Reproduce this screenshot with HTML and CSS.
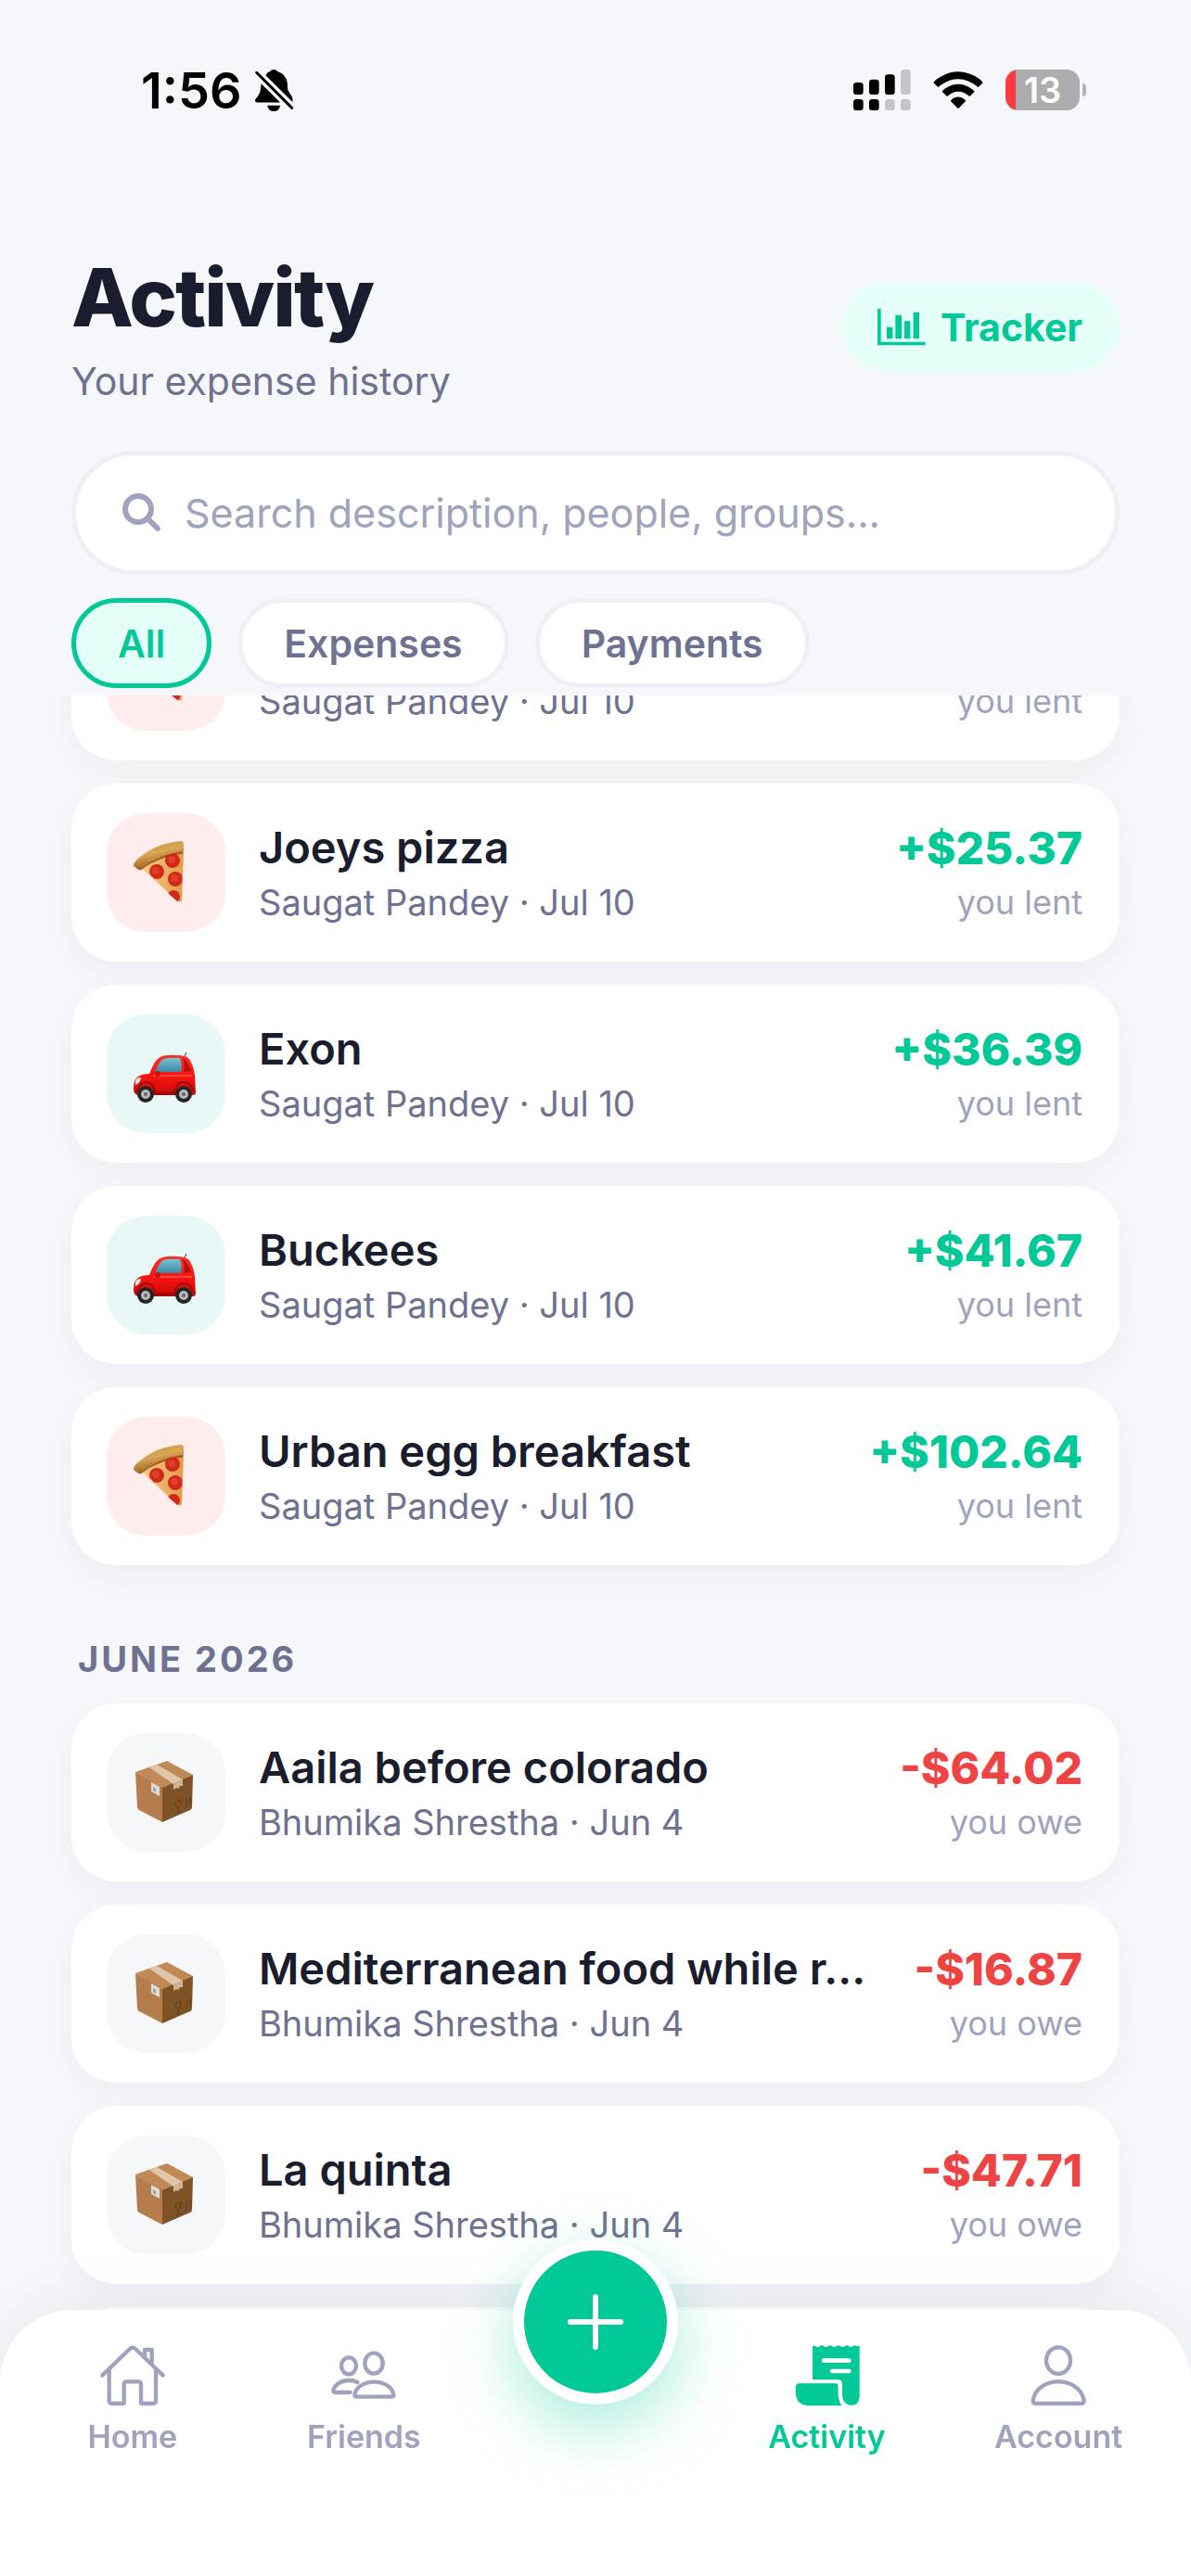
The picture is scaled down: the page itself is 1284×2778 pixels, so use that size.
FILE: index.html
```
<!DOCTYPE html>
<html lang="en">
<head>
    <meta charset="UTF-8">
    <meta name="viewport" content="width=device-width, initial-scale=1.0">
    <title>Activity</title>
    <link rel="stylesheet" href="styles.css">
</head>
<body>
    <svg class="sprite" aria-hidden="true">
        <defs>
            <linearGradient id="crust" x1="0" y1="0" x2="0.4" y2="1">
                <stop offset="0" stop-color="#c8953f"/>
                <stop offset="0.5" stop-color="#d9a655"/>
                <stop offset="1" stop-color="#8d5117"/>
            </linearGradient>
            <linearGradient id="cheese" x1="0" y1="0" x2="1" y2="0">
                <stop offset="0" stop-color="#f3cf8c"/>
                <stop offset="1" stop-color="#e59a48"/>
            </linearGradient>
            <linearGradient id="paint" x1="0" y1="0" x2="0" y2="1">
                <stop offset="0" stop-color="#f5342a"/>
                <stop offset="0.5" stop-color="#fb1510"/>
                <stop offset="1" stop-color="#c90a0a"/>
            </linearGradient>
            <linearGradient id="glass" x1="0" y1="0" x2="0" y2="1">
                <stop offset="0" stop-color="#7cc4d3"/>
                <stop offset="1" stop-color="#3d86a3"/>
            </linearGradient>
            <clipPath id="slice">
                <path d="M38 57 Q56 43 82 41 L81 94 Q79 98 75 94 L69 89 Z"/>
            </clipPath>
        </defs>
        <symbol id="pizza" viewBox="0 0 128 128">
            <path d="M36 58 Q56 42 83 39 L81 94 Q80 97 76 94 Z" fill="url(#cheese)"/>
            <path d="M36 60 Q56 45 82 42" fill="none" stroke="#a3591c" stroke-width="3"/>
            <g clip-path="url(#slice)" fill="#cf2a1b">
                <circle cx="71" cy="51" r="8"/>
                <circle cx="54" cy="63" r="8"/>
                <circle cx="74" cy="71" r="8"/>
                <circle cx="72" cy="90" r="7"/>
            </g>
            <g fill="#de3f26">
                <circle cx="70" cy="50" r="4"/>
                <circle cx="53" cy="62" r="4"/>
                <circle cx="73" cy="70" r="4"/>
            </g>
            <path d="M29 57 Q29 52 35 48 Q54 32 80 30 Q83 30 83 34 L83 41 Q56 44 37 61 Q35 62 33 60 Z" fill="url(#crust)"/>
        </symbol>
        <symbol id="car" viewBox="0 0 128 128">
            <path d="M84 45 L86 41" stroke="#333" stroke-width="1" fill="none"/>
            <path d="M46 64 Q51 51 56 47 Q62 43 75 44 Q86 44 89 48 Q94 56 95 66 L96 84 Q96 87 93 87 L34 87 Q29 86 29 80 Q29 70 34 67 Q38 64 46 64Z" fill="url(#paint)"/>
            <path d="M52 62 Q57 50 61 48 Q66 46 79 47 Q82 55 80 62 Z" fill="url(#glass)"/>
            <path d="M84 48 Q89 54 91 61 L83 62 Q85 55 82 48Z" fill="#b50e0c"/>
            <path d="M50 66 H92" stroke="#ff7a70" stroke-width="1"/>
            <path d="M31 72 Q32 68 37 68 Q37 73 31 76Z" fill="#fde9d6"/>
            <path d="M50 85 H76" stroke="#a50606" stroke-width="4"/>
            <path d="M32 84 Q35 73 43 73 Q51 73 52 85 M73 85 Q75 73 83 73 Q91 73 93 83" fill="none" stroke="#9f0808" stroke-width="2"/>
            <ellipse cx="55" cy="64" rx="3" ry="3" fill="#d40d0d"/>
            <circle cx="42" cy="86" r="9" fill="#262626"/>
            <circle cx="42" cy="86" r="5" fill="#b9b9b9"/>
            <circle cx="42" cy="86" r="2" fill="#666"/>
            <circle cx="83" cy="86" r="9" fill="#262626"/>
            <circle cx="83" cy="86" r="5" fill="#b9b9b9"/>
            <circle cx="83" cy="86" r="2" fill="#666"/>
        </symbol>
        <symbol id="box" viewBox="0 0 128 128">
            <path d="M31 42 L65 30 L93 45 L60 60Z" fill="#c08a57"/>
            <path d="M31 42 L60 59 L60 96 L35 83 Q33 82 33 80Z" fill="#b67d4c"/>
            <path d="M60 59 L93 45 L92 80 Q92 82 90 83 L60 96Z" fill="#805327"/>
            <path d="M46 37 L54 34 L82 50 L72 55Z" fill="#e0c6a8"/>
            <path d="M72 55 L82 50 L82 57 L79 57 L77 60 L75 59 L72 61Z" fill="#cdb595"/>
            <path d="M48 53 L57 58 L57 68 L48 63Z" fill="#dcdcd8"/>
            <path d="M50 58 L53 60 V64 L50 62Z" fill="#9aa0a3"/>
            <path d="M74 75 L80 72 Q80 79 77 80 Q74 80 74 75 M77 80 V86 M74 87 L80 84 M86 71 V80 M90 69 V78" fill="none" stroke="#5b3a1a" stroke-width="1"/>
        </symbol>
    </svg>

    <header class="header">
        <div class="status-bar">
            <div class="status-left">
                <span class="time">1:56</span>
                <svg class="bell" viewBox="404 40 130 145" aria-hidden="true">
                    <path d="M442 66 Q446 54 455 53 Q460 46 468 46 Q476 46 481 53 Q506 60 512 88 L513 108 Q514 116 527 134 Q531 142 529 152Z"/>
                    <path d="M427 92 L489 153 H412 Q404 150 408 143 Q421 128 424 116 Z"/>
                    <path d="M447 163 H489 Q486 182 468 182 Q450 182 447 163Z"/>
                    <path d="M412 56 L527 171" fill="none" stroke="#000" stroke-width="9" stroke-linecap="round"/>
                </svg>
            </div>
            <div class="status-right">
                <svg class="signal" viewBox="123 75 186 132" aria-hidden="true">
                    <rect x="123" y="117" width="32" height="39" rx="10"/>
                    <rect x="174" y="107" width="32" height="49" rx="10"/>
                    <rect x="225" y="91" width="32" height="65" rx="10"/>
                    <rect x="123" y="171" width="32" height="36" rx="10"/>
                    <rect x="174" y="171" width="32" height="36" rx="10"/>
                    <g fill="#c4c5c9">
                        <rect x="276" y="75" width="32" height="81" rx="10"/>
                        <rect x="225" y="171" width="32" height="36" rx="10"/>
                        <rect x="276" y="171" width="32" height="36" rx="10"/>
                    </g>
                </svg>
                <svg class="wifi" viewBox="379 75 162 132" aria-hidden="true">
                    <path d="M380 118 Q384 110 392 105 Q460 59 528 105 Q536 110 540 118 L525 132 Q460 80 395 132Z"/>
                    <path d="M408 146 Q412 140 420 135 Q460 109 500 135 Q508 140 513 146 L497 162 Q460 131 424 162Z"/>
                    <path d="M435 176 Q460 151 485 176 L463 199 Q460 202 457 199Z"/>
                </svg>
                <div class="battery">13</div>
            </div>
        </div>

        <div class="title-row">
            <div>
                <h1>Activity</h1>
                <p class="subtitle">Your expense history</p>
            </div>
            <button class="tracker-btn">
                <svg viewBox="192 153 156 120" aria-hidden="true">
                    <path d="M192 153 H203 V260 H347 V271 H192Z"/>
                    <path d="M222 212 H241 V250 H222Z M250 174 H270 V250 H250Z M279 193 H298 V250 H279Z M308 164 H327 V250 H308Z"/>
                </svg>
                Tracker
            </button>
        </div>

        <label class="search-bar">
            <svg viewBox="0 0 42 42" aria-hidden="true">
                <circle cx="17" cy="17" r="14"/>
                <path d="M27 27 L38 38"/>
            </svg>
            <input type="text" class="search-input" placeholder="Search description, people, groups..." aria-label="Search">
        </label>

        <div class="filters">
            <button class="chip active">All</button>
            <button class="chip">Expenses</button>
            <button class="chip">Payments</button>
        </div>
    </header>

    <main class="feed">
        <ul class="list">
            <li class="card">
                <span class="tile food"><svg><use href="#pizza"/></svg></span>
                <div class="info">
                    <div class="name">&nbsp;</div>
                    <div class="meta">Saugat Pandey · Jul 10</div>
                </div>
                <div class="amount lent">
                    <div class="value">&nbsp;</div>
                    <div class="note">you lent</div>
                </div>
            </li>
            <li class="card">
                <span class="tile food"><svg><use href="#pizza"/></svg></span>
                <div class="info">
                    <div class="name">Joeys pizza</div>
                    <div class="meta">Saugat Pandey · Jul 10</div>
                </div>
                <div class="amount lent">
                    <div class="value">+$25.37</div>
                    <div class="note">you lent</div>
                </div>
            </li>
            <li class="card">
                <span class="tile travel"><svg><use href="#car"/></svg></span>
                <div class="info">
                    <div class="name">Exon</div>
                    <div class="meta">Saugat Pandey · Jul 10</div>
                </div>
                <div class="amount lent">
                    <div class="value">+$36.39</div>
                    <div class="note">you lent</div>
                </div>
            </li>
            <li class="card">
                <span class="tile travel"><svg><use href="#car"/></svg></span>
                <div class="info">
                    <div class="name">Buckees</div>
                    <div class="meta">Saugat Pandey · Jul 10</div>
                </div>
                <div class="amount lent">
                    <div class="value">+$41.67</div>
                    <div class="note">you lent</div>
                </div>
            </li>
            <li class="card">
                <span class="tile food"><svg><use href="#pizza"/></svg></span>
                <div class="info">
                    <div class="name">Urban egg breakfast</div>
                    <div class="meta">Saugat Pandey · Jul 10</div>
                </div>
                <div class="amount lent">
                    <div class="value">+$102.64</div>
                    <div class="note">you lent</div>
                </div>
            </li>
        </ul>

        <h2 class="month">JUNE 2026</h2>
        <ul class="list">
            <li class="card">
                <span class="tile other"><svg><use href="#box"/></svg></span>
                <div class="info">
                    <div class="name">Aaila before colorado</div>
                    <div class="meta">Bhumika Shrestha · Jun 4</div>
                </div>
                <div class="amount owe">
                    <div class="value">-$64.02</div>
                    <div class="note">you owe</div>
                </div>
            </li>
            <li class="card">
                <span class="tile other"><svg><use href="#box"/></svg></span>
                <div class="info">
                    <div class="name">Mediterranean food while r...</div>
                    <div class="meta">Bhumika Shrestha · Jun 4</div>
                </div>
                <div class="amount owe">
                    <div class="value">-$16.87</div>
                    <div class="note">you owe</div>
                </div>
            </li>
            <li class="card">
                <span class="tile other"><svg><use href="#box"/></svg></span>
                <div class="info">
                    <div class="name">La quinta</div>
                    <div class="meta">Bhumika Shrestha · Jun 4</div>
                </div>
                <div class="amount owe">
                    <div class="value">-$47.71</div>
                    <div class="note">you owe</div>
                </div>
            </li>
            <li class="card"><span class="tile other"></span></li>
        </ul>
    </main>

    <nav class="tab-bar">
        <a href="#home" class="tab">
            <svg viewBox="82 77 216 216" aria-hidden="true">
                <path d="M92 184 L181 98 Q190 90 199 98 L288 184"/>
                <path d="M229 122 V101 H252 V148"/>
                <path d="M114 165 V266 Q114 275 123 275 H162 V213 Q162 204 171 204 H208 Q217 204 217 213 V275 H256 Q265 275 265 266 V165"/>
            </svg>
            <span>Home</span>
        </a>
        <a href="#friends" class="tab">
            <svg viewBox="830 77 216 216" aria-hidden="true">
                <ellipse cx="890" cy="153" rx="24" ry="27"/>
                <ellipse cx="971" cy="145" rx="29" ry="33"/>
                <path d="M909 247 C912 222 940 205 972 205 C1004 205 1032 222 1035 247 Q1035 253 1029 253 H915 Q909 253 909 247Z"/>
                <path d="M895 239 H846 Q840 239 840 233 C845 212 868 200 890 200 Q906 200 918 206"/>
            </svg>
            <span>Friends</span>
        </a>
        <div class="tab">
            <button class="add-btn" aria-label="Add expense">
                <svg viewBox="0 0 60 60" aria-hidden="true"><path d="M30 3 V57 M3 30 H57"/></svg>
            </button>
        </div>
        <a href="#activity" class="tab active">
            <svg class="solid" viewBox="163 77 216 216" aria-hidden="true">
                <path d="M223 90 Q226 86 233 90 Q239 95 246 90 Q254 84 261 90 Q267 95 273 90 Q279 84 287 90 Q293 95 300 90 Q306 84 313 90 Q320 95 327 90 Q333 84 340 90 Q347 95 353 90 Q360 84 366 90 Q372 84 375 91 V255 Q372 281 348 281 Q320 279 319 245 V212 Q319 198 305 198 H223Z"/>
                <path d="M182 210 H297 Q306 210 306 220 V250 Q308 270 317 282 H205 Q168 278 168 235 V224 Q168 210 182 210Z"/>
                <path class="lines" d="M259 136 H341 M286 170 H341"/>
            </svg>
            <span>Activity</span>
        </a>
        <a href="#account" class="tab">
            <svg viewBox="911 77 216 216" aria-hidden="true">
                <ellipse cx="1019" cy="136" rx="39" ry="43"/>
                <path d="M937 267 C942 226 980 204 1019 204 C1058 204 1096 226 1102 267 Q1102 275 1094 275 H945 Q937 275 937 267Z"/>
            </svg>
            <span>Account</span>
        </a>
    </nav>
</body>
</html>
```
FILE: styles.css
```
* {
    margin: 0;
    padding: 0;
    box-sizing: border-box;
}

body {
    display: flex;
    flex-direction: column;
    height: 100vh;
    overflow: hidden;
    font-family: Inter, 'Liberation Sans', sans-serif;
    background-color: #f6f7fb;
    color: #1a1d2e;
}

button,
input {
    font-family: inherit;
    border: none;
    background: none;
}

button {
    cursor: pointer;
}

.sprite {
    position: absolute;
    width: 0;
    height: 0;
}

/* Header stays above the scrolled list */
.header {
    position: relative;
    z-index: 2;
    flex: none;
    padding: 0 77px 8px;
    background-color: #f6f7fb;
}

.status-bar {
    display: flex;
    justify-content: space-between;
    align-items: center;
    height: 194px;
    padding: 0 43px 0 75px;
    color: #000;
}

.status-left {
    display: flex;
    align-items: center;
    gap: 13px;
}

.status-right {
    display: flex;
    align-items: center;
    gap: 24px;
}

.time {
    font-size: 54px;
    font-weight: 600;
}

.bell {
    width: 43px;
    height: 48px;
}

.signal {
    width: 62px;
    height: 44px;
}

.wifi {
    width: 54px;
    height: 44px;
}

.battery {
    position: relative;
    width: 80px;
    height: 44px;
    border-radius: 14px;
    background: linear-gradient(to right, #ff3b40 11px, #abadaf 11px);
    color: white;
    font-size: 38px;
    font-weight: 600;
    line-height: 44px;
    text-align: center;
}

.battery::after {
    content: "";
    position: absolute;
    top: 15px;
    right: -7px;
    width: 4px;
    height: 14px;
    border-radius: 0 4px 4px 0;
    background: #b4b5b9;
}

.title-row {
    display: flex;
    justify-content: space-between;
    align-items: center;
    margin-top: 75px;
    margin-bottom: 50px;
}

h1 {
    font-size: 87px;
    font-weight: 800;
    line-height: 104px;
    letter-spacing: -2px;
}

.subtitle {
    margin-top: 13px;
    font-size: 41px;
    line-height: 50px;
    color: #6e7191;
}

.tracker-btn {
    display: flex;
    align-items: center;
    gap: 16px;
    height: 96px;
    padding: 0 40px 0 38px;
    border-radius: 48px;
    background-color: #e4fff8;
    color: #00c897;
    font-size: 41px;
    font-weight: 700;
}

.tracker-btn svg {
    width: 52px;
    height: 40px;
    fill: #00c897;
}

.search-bar {
    display: flex;
    align-items: center;
    gap: 25px;
    height: 134px;
    padding: 0 50px;
    border: 5px solid #eff0f6;
    border-radius: 67px;
    background-color: white;
}

.search-bar svg {
    width: 42px;
    height: 42px;
    fill: none;
    stroke: #a0a3bd;
    stroke-width: 6;
    stroke-linecap: round;
}

.search-input {
    flex: 1;
    font-size: 43px;
    color: #1a1d2e;
    outline: none;
}

.search-input::placeholder {
    color: #a0a3bd;
}

.filters {
    display: flex;
    gap: 28px;
    margin-top: 25px;
}

.chip {
    height: 97px;
    padding: 0 45px;
    border: 5px solid #eff0f6;
    border-radius: 49px;
    background-color: white;
    color: #6e7191;
    font-size: 41px;
    font-weight: 600;
}

.chip.active {
    border-color: #00c897;
    background-color: #e4fff8;
    color: #00c897;
}

.feed {
    flex: 1;
    min-height: 0;
    margin-top: -122px;
    padding: 0 77px;
    overflow: hidden;
}

.list {
    display: flex;
    flex-direction: column;
    gap: 25px;
    list-style: none;
}

.card {
    display: flex;
    align-items: center;
    gap: 36px;
    padding: 32px 40px 32px 38px;
    border-radius: 48px;
    background: white;
    box-shadow: 0 12px 36px rgba(0, 0, 0, 0.04);
}

.tile {
    flex: none;
    width: 128px;
    height: 128px;
    border-radius: 42px;
}

.tile svg {
    display: block;
    width: 100%;
    height: 100%;
}

.food {
    background-color: #ffecec;
}

.travel {
    background-color: #e8f8f7;
}

.other {
    background-color: #f5f7f9;
}

.info {
    flex: 1;
    min-width: 0;
}

.name {
    margin-bottom: 8px;
    font-size: 47px;
    font-weight: 600;
    line-height: 56px;
    white-space: nowrap;
    overflow: hidden;
    text-overflow: ellipsis;
}

.meta {
    font-size: 38px;
    line-height: 46px;
    color: #6e7191;
}

.amount {
    text-align: right;
}

.value {
    margin-bottom: 6px;
    font-size: 48px;
    font-weight: 800;
    line-height: 58px;
}

.lent .value {
    color: #00c897;
}

.owe .value {
    color: #ef4444;
}

.note {
    font-size: 36px;
    line-height: 46px;
    color: #a0a3bd;
}

.month {
    margin: 78px 7px 25px;
    font-size: 38px;
    font-weight: 700;
    line-height: 46px;
    letter-spacing: 3px;
    color: #6e7191;
}

.tab-bar {
    position: fixed;
    left: 0;
    right: 0;
    bottom: 0;
    z-index: 3;
    display: flex;
    padding: 35px 18px 129px;
    border-radius: 78px 78px 0 0;
    background-color: white;
    box-shadow: 0 -12px 60px rgba(0, 0, 0, 0.05);
}

.tab {
    flex: 1;
    display: flex;
    flex-direction: column;
    align-items: center;
    gap: 9px;
    position: relative;
    color: #a0a3bd;
    font-size: 34px;
    font-weight: 600;
    line-height: 42px;
    text-decoration: none;
}

.tab > svg {
    width: 72px;
    height: 72px;
    fill: none;
    stroke: currentColor;
    stroke-width: 13;
    stroke-linecap: round;
    stroke-linejoin: round;
}

.tab > .solid {
    fill: currentColor;
    stroke: none;
}

.solid .lines {
    stroke: white;
    stroke-width: 14;
}

.tab.active {
    color: #00c897;
}

.add-btn {
    position: absolute;
    top: -111px;
    display: flex;
    align-items: center;
    justify-content: center;
    width: 178px;
    height: 178px;
    border: 12px solid white;
    border-radius: 50%;
    background-color: #00c897;
    box-shadow: 0 24px 72px rgba(0, 200, 151, 0.35);
}

.add-btn svg {
    width: 60px;
    height: 60px;
    fill: none;
    stroke: white;
    stroke-width: 6;
    stroke-linecap: round;
}
```
